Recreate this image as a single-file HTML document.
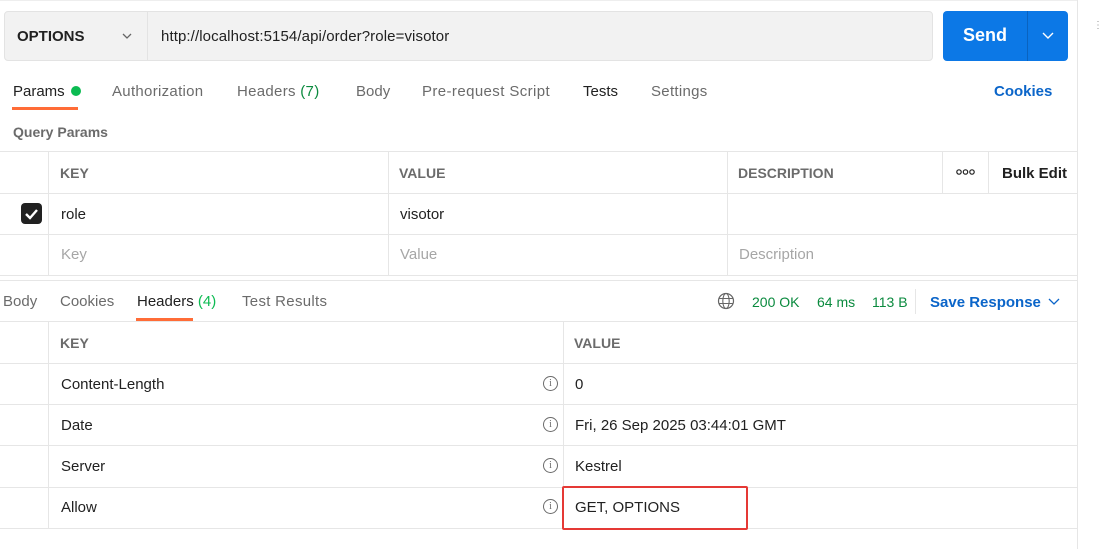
<!DOCTYPE html>
<html><head><style>
*{box-sizing:border-box;margin:0;padding:0}
body{width:1100px;height:549px;background:#fff;font-family:"Liberation Sans",Arial,sans-serif;font-size:15px;color:#212121;position:relative;overflow:hidden}
.a{position:absolute}
.hl{position:absolute;height:1px;background:#e6e6e6}
.vl{position:absolute;width:1px;background:#e6e6e6}
.t{position:absolute;white-space:nowrap}
.g{color:#6b6b6b}
.b{font-weight:bold}
.ph{color:#a6a6a6}
.info{position:absolute;width:15px;height:15px;border:1px solid #6b6b6b;border-radius:50%;font-size:10px;line-height:13px;text-align:center;color:#6b6b6b;font-family:"Liberation Serif",serif}
</style></head><body>
<div class="hl" style="top:0;left:0;width:1077px;background:#eee"></div>
<div class="vl" style="left:1077px;top:0;height:549px;background:#e6e6e6"></div>
<div class="t" style="left:1093px;top:20px;color:#999;font-size:10px">⋮</div>
<div class="a" style="left:4px;top:11px;width:929px;height:50px;background:#f2f2f2;border:1px solid #e3e3e3;border-radius:4px"></div>
<div class="vl" style="left:147px;top:12px;height:48px;background:#e3e3e3"></div>
<div class="t b" style="left:17px;top:28px;font-size:15px">OPTIONS</div>
<svg class="a" style="left:121px;top:31px" width="12" height="10"><path d="M2 3l4 4 4-4" fill="none" stroke="#666" stroke-width="1.3"/></svg>
<div class="t" style="left:161px;top:28px;font-size:15px;letter-spacing:0.1px">http://localhost:5154/api/order?role=visotor</div>
<div class="a" style="left:943px;top:11px;width:125px;height:50px;background:#0c78e6;border-radius:4px"></div>
<div class="vl" style="left:1027px;top:11px;height:50px;background:#0a63c0"></div>
<div class="t b" style="left:963px;top:25px;font-size:18px;color:#fff">Send</div>
<svg class="a" style="left:1041px;top:31px" width="14" height="10"><path d="M2 2l5 5 5-5" fill="none" stroke="#fff" stroke-width="1.4"/></svg>
<div class="t" style="left:13px;top:83px">Params</div>
<div class="a" style="left:71px;top:86px;width:10px;height:10px;border-radius:50%;background:#0cbb52"></div>
<div class="a" style="left:12px;top:107px;width:66px;height:3px;background:#ff6c37"></div>
<div class="t g" style="left:112px;top:83px;letter-spacing:0.3px">Authorization</div>
<div class="t g" style="left:237px;top:83px;letter-spacing:0.3px">Headers <span style="color:#0a8a3e">(7)</span></div>
<div class="t g" style="left:356px;top:83px">Body</div>
<div class="t g" style="left:422px;top:83px;letter-spacing:0.4px">Pre-request Script</div>
<div class="t" style="left:583px;top:83px">Tests</div>
<div class="t g" style="left:651px;top:83px;letter-spacing:0.3px">Settings</div>
<div class="t b" style="left:994px;top:83px;color:#0b65c9">Cookies</div>
<div class="t b g" style="left:13px;top:124px;font-size:14px">Query Params</div>
<div class="hl" style="top:151px;left:0;width:1077px"></div>
<div class="hl" style="top:193px;left:0;width:1077px"></div>
<div class="hl" style="top:234px;left:0;width:1077px"></div>
<div class="hl" style="top:275px;left:0;width:1077px"></div>
<div class="hl" style="top:280px;left:0;width:1077px"></div>
<div class="vl" style="left:48px;top:152px;height:123px"></div>
<div class="vl" style="left:388px;top:152px;height:123px"></div>
<div class="vl" style="left:727px;top:152px;height:123px"></div>
<div class="vl" style="left:942px;top:152px;height:41px"></div>
<div class="vl" style="left:988px;top:152px;height:41px"></div>
<div class="t b g" style="left:60px;top:165px;font-size:14px">KEY</div>
<div class="t b g" style="left:399px;top:165px;font-size:14px">VALUE</div>
<div class="t b g" style="left:738px;top:165px;font-size:14px">DESCRIPTION</div>
<svg class="a" style="left:956px;top:168px" width="20" height="8"><circle cx="3" cy="4" r="2.2" fill="none" stroke="#222" stroke-width="1.2"/><circle cx="9.5" cy="4" r="2.2" fill="none" stroke="#222" stroke-width="1.2"/><circle cx="16" cy="4" r="2.2" fill="none" stroke="#222" stroke-width="1.2"/></svg>
<div class="t b" style="left:1002px;top:165px">Bulk Edit</div>
<div class="a" style="left:21px;top:203px;width:21px;height:21px;background:#212121;border-radius:4px"></div>
<svg class="a" style="left:21px;top:203px" width="21" height="21"><path d="M5 11l4 4 7-8" fill="none" stroke="#fff" stroke-width="2.4"/></svg>
<div class="t" style="left:61px;top:206px">role</div>
<div class="t" style="left:400px;top:206px">visotor</div>
<div class="t ph" style="left:61px;top:246px">Key</div>
<div class="t ph" style="left:400px;top:246px">Value</div>
<div class="t ph" style="left:739px;top:246px">Description</div>
<div class="t g" style="left:3px;top:293px">Body</div>
<div class="t g" style="left:60px;top:293px">Cookies</div>
<div class="t" style="left:137px;top:293px">Headers <span style="color:#0cbb52">(4)</span></div>
<div class="a" style="left:136px;top:318px;width:57px;height:3px;background:#ff6c37"></div>
<div class="t g" style="left:242px;top:293px;letter-spacing:0.3px">Test Results</div>
<svg class="a" style="left:717px;top:292px" width="18" height="18"><circle cx="9" cy="9" r="7.5" fill="none" stroke="#666" stroke-width="1.2"/><ellipse cx="9" cy="9" rx="3.2" ry="7.5" fill="none" stroke="#666" stroke-width="1.1"/><path d="M1.5 6.5h15M1.5 11.5h15" stroke="#666" stroke-width="1.1"/></svg>
<div class="t" style="left:752px;top:294px;font-size:14px;color:#0a8a3e">200 OK</div>
<div class="t" style="left:817px;top:294px;font-size:14px;color:#0a8a3e">64 ms</div>
<div class="t" style="left:872px;top:294px;font-size:14px;color:#0a8a3e">113 B</div>
<div class="vl" style="left:915px;top:289px;height:25px"></div>
<div class="t b" style="left:930px;top:294px;color:#0b65c9">Save Response</div>
<svg class="a" style="left:1048px;top:297px" width="12" height="10"><path d="M1 2l5 5 5-5" fill="none" stroke="#0b65c9" stroke-width="1.3"/></svg>
<div class="hl" style="top:321px;left:0;width:1077px"></div>
<div class="hl" style="top:363px;left:0;width:1077px"></div>
<div class="hl" style="top:404px;left:0;width:1077px"></div>
<div class="hl" style="top:445px;left:0;width:1077px"></div>
<div class="hl" style="top:487px;left:0;width:1077px"></div>
<div class="hl" style="top:528px;left:0;width:1077px"></div>
<div class="vl" style="left:48px;top:322px;height:206px"></div>
<div class="vl" style="left:563px;top:322px;height:206px"></div>
<div class="t b g" style="left:60px;top:335px;font-size:14px">KEY</div>
<div class="t b g" style="left:574px;top:335px;font-size:14px">VALUE</div>
<div class="t" style="left:61px;top:376px">Content-Length</div>
<div class="t" style="left:61px;top:417px">Date</div>
<div class="t" style="left:61px;top:458px">Server</div>
<div class="t" style="left:61px;top:499px">Allow</div>
<div class="info" style="left:543px;top:376px">i</div>
<div class="info" style="left:543px;top:417px">i</div>
<div class="info" style="left:543px;top:458px">i</div>
<div class="info" style="left:543px;top:499px">i</div>
<div class="t" style="left:575px;top:376px">0</div>
<div class="t" style="left:575px;top:417px">Fri, 26 Sep 2025 03:44:01 GMT</div>
<div class="t" style="left:575px;top:458px">Kestrel</div>
<div class="t" style="left:575px;top:499px">GET, OPTIONS</div>
<div class="a" style="left:562px;top:486px;width:186px;height:44px;border:2px solid #e53935;border-radius:2px"></div>
</body></html>
